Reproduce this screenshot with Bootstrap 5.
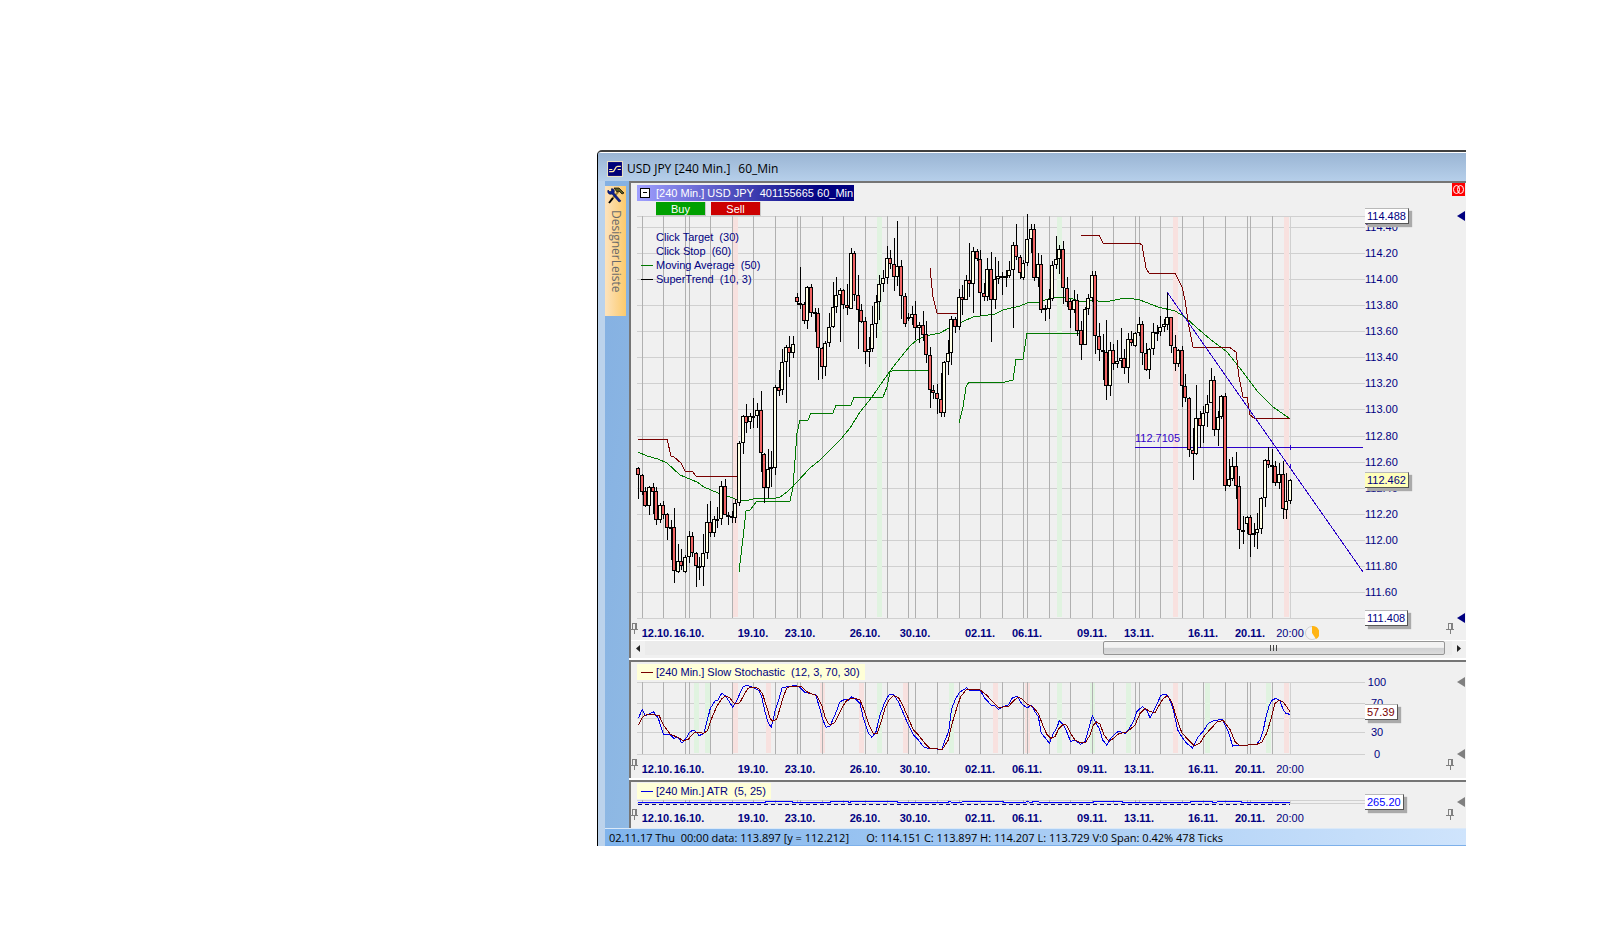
<!DOCTYPE html>
<html lang="en">
<head>
<meta charset="utf-8">
<meta name="viewport" content="width=device-width, initial-scale=1">
<title>USD JPY [240 Min.] 60_Min</title>
<link href="https://cdn.jsdelivr.net/npm/bootstrap@5.3.0/dist/css/bootstrap.min.css" rel="stylesheet">
<style>
  body { background: #fff; font-family: "Liberation Sans", Arial, sans-serif; font-size: 11px; line-height: 14px; color: #000080; }
  .desktop { display: grid; grid-template-columns: 597fr 869fr 141fr; padding-top: 150px; }
  .chart-window { grid-column: 2; min-width: 0; background: #bcd3ec; border-top: 2px solid #3f3f3f; border-left: 1px solid #000; border-top-left-radius: 5px; overflow: hidden; }
  .titlebar { height: 29px; border-top: 1px solid #fff; background: linear-gradient(#9ab5d4, #b6cfea); font: 12px/16px "Open Sans", sans-serif; color: #000; padding: 8px 0 0 9px; }
  .workspace { padding-left: 7px; }
  .sidebar { width: 24px; background: linear-gradient(100deg, #84b0e2, #8fb9e4); padding-top: 5px; }
  .side-tab { width: 21px; height: 130px; background: linear-gradient(90deg, #fde3bd, #fcca6c); color: #6b6b6b; border: 0; padding: 1px 0 0; font: 12px/16px "Open Sans", sans-serif; }
  .side-tab span { writing-mode: vertical-rl; margin-top: 6px; }
  .panes { background: #fff; }
  .pane { background: #f0f0f0; border-top: 2px solid #757575; border-left: 2px solid #757575; }
  .pane-main { height: 477px; margin-bottom: 2px; padding-top: 2px; }
  .pane-stoch { height: 118px; margin-bottom: 2px; padding-top: 2px; }
  .pane-stoch .tag { margin-bottom: 2px; }
  .pane-atr { height: 48px; padding-top: 1px; }
  .inset-row { margin-left: 6px; }
  .instrument { width: 217px; height: 16px; background: linear-gradient(90deg, #a0a0ff, #000080 86%); color: #fff; padding-left: 3px; line-height: 16px; white-space: pre; }
  .collapse-box { width: 10px; height: 10px; background: #fff; border: 1px solid #000; margin-right: 6px; padding: 0; position: relative; }
  .collapse-box::after { content: ""; position: absolute; left: 2px; right: 2px; top: 3px; height: 1px; background: #000; }
  .trade-row { height: 15px; padding: 1px 0 0 19px; }
  .trade { width: 50px; height: 14px; border: 1px solid #c8c8c8; border-width: 0 1px 1px 0; color: #fff; padding: 1px 0 0; font-size: 11px; line-height: 13px; margin-right: 5px; }
  .buy { background: #00a000; }
  .sell { background: #cc0000; }
  .plot { position: relative; min-width: 0; }
  .plot svg { display: block; width: 100%; overflow: visible; }
  .plot path, .plot line, .plot polyline { vector-effect: non-scaling-stroke; fill: none; }
  .h-403 { height: 403px; }
  .h-73 { height: 73px; }
  .h-6 { height: 6px; }
  .axis { width: 101px; position: relative; }
  .axis .tick { position: absolute; left: 0; transform: translateY(-50%); }
  .axis .mid { width: 24px; text-align: center; }
  .value-box { position: absolute; left: 0; transform: translateY(-50%); background: #fff; border: 1px solid #b8b8b8; border-left: 0; border-right-color: #555; border-bottom-color: #555; box-shadow: 3px 3px 1px #aaa; padding: 0 2px; line-height: 14px; z-index: 1; }
  .marker { position: absolute; right: 1px; transform: translateY(-50%); border: 5px solid transparent; border-left: 0; border-right: 8px solid #000080; }
  .marker.grey { border-right-color: #808080; }
  .dates { position: relative; height: 21px; margin: 0 101px 0 6px; font-weight: 700; }
  .dates span { position: absolute; top: 7px; transform: translateX(-50%); }
  .dates .last { font-weight: 400; }
  .pane-atr .dates span { top: 6px; }
  .date-row { position: relative; }
  .pin { position: absolute; top: 4px; }
  .pin-l { left: -1px; }
  .pin-r { right: 11px; }
  .alert-box { position: absolute; right: 1px; top: 0; }
  .legend { position: absolute; left: 4px; top: 14px; white-space: pre; }
  .legend div { padding-left: 15px; height: 14px; position: relative; }
  .legend .keyed::before, .tag::before { content: ""; position: absolute; left: 0; top: 7px; width: 12px; height: 1px; background: var(--key); }
  .level-label { position: absolute; transform: translateY(-100%); color: #3200c8; }
  .tag { position: relative; width: max-content; height: 16px; line-height: 16px; background: #ffffd7; padding: 0 5px 0 19px; white-space: pre; }
  .tag::before { left: 4px; top: 8px; }
  .scroll-track { height: 15px; background: #ebebeb; border-top: 1px solid #fff; }
  .scroll-track button { width: 14px; border: 0; padding: 0; background: #f0f0f0; line-height: 0; }
  .track { display: grid; grid-template-columns: 457fr 342fr 7fr; }
  .thumb { grid-column: 2; border: 1px solid #959595; border-radius: 2px; background: linear-gradient(#f3f3f3 45%, #cfd0d2 50%, #dcdcdc); display: flex; align-items: center; justify-content: center; gap: 2px; }
  .thumb i { width: 1px; height: 6px; background: #444; }
  .status { margin-left: 7px; height: 18px; background: linear-gradient(90deg, #80b4ec, #cfe4fc); border-bottom: 1px solid #7db0ea; border-top: 1px solid #dbe9f8; color: #000; font: 11px/18px "Open Sans", sans-serif; padding-left: 4px; white-space: pre; overflow: hidden; }
</style>
</head>
<body>
<div class="desktop">
<main class="chart-window">
  <header class="titlebar d-flex">
    <svg width="16" height="16" viewBox="0 0 15 15" class="me-1 flex-shrink-0"><rect width="15" height="15" fill="#e8e0c0"/><rect x="1" y="1" width="13" height="13" fill="#000078"/><path d="M2 10h3c3 0 2-5 5-5h3" stroke="#ffe9a8" fill="none" stroke-width="1.300"/><path d="M2 8h3M10 8h3" stroke="#ffe9a8" fill="none"/></svg>
    <span>USD JPY [240 Min.]</span><span class="ms-2">60_Min</span>
  </header>
  <div class="workspace d-flex">
    <aside class="sidebar flex-shrink-0">
      <button class="side-tab d-flex flex-column align-items-center" type="button">
        <svg width="17" height="17" viewBox="0 0 17 17" class="flex-shrink-0"><path d="M4 13 12 4" stroke="#a08030" stroke-width="2"/><path d="M2 16 6 11" stroke="#000" stroke-width="2"/><path d="M7 1h5l3 3 2 2-2 1-3-3-2 1z" fill="#5c5c20" stroke="#000" stroke-width=".7"/><path d="M1 3l2 2 2-2-1-1c3-1 4 2 3 4l7 8-2 1-7-8c-3 1-5-1-4-4z" fill="#0a1e90" stroke="#001050" stroke-width=".6"/></svg>
        <span>DesignerLeiste</span>
      </button>
    </aside>
    <div class="panes flex-grow-1">
      <section class="pane pane-main position-relative">
        <svg class="alert-box" width="13" height="13" viewBox="0 0 13 13"><rect width="13" height="13" fill="#f00"/><g fill="none" stroke="#fff"><ellipse cx="4.500" cy="6.500" rx="3" ry="4"/><ellipse cx="8.500" cy="6.500" rx="3" ry="4"/></g></svg>
        <div class="inset-row instrument d-flex align-items-center"><button class="collapse-box flex-shrink-0" type="button" aria-label="Collapse"></button>[240 Min.] USD JPY  401155665 60_Min</div>
        <div class="inset-row trade-row d-flex"><button class="trade buy" type="button">Buy</button><button class="trade sell" type="button">Sell</button></div>
        <div class="inset-row d-flex">
          <div class="plot flex-grow-1">
            <svg id="price" class="h-403" viewBox="637 216 728 403" preserveAspectRatio="none" shape-rendering="crispEdges">
              <g class="grid"></g>
              <g stroke="#007800">
                <polyline points="638,452 647,456 658,459 667,463 680,475 697,482 704,487 718,493 730,497 738,500 745,501 757,498 772,499 780,497 787,492 797,482 810,468 820,460 829,451 841,439 850,428 860,412 872,397 883,381 893,367 901,357 910,346 917,340 923,337 930,335 940,333 949,328 952,326 962,322 973,317 995,314 1003,310 1020,306 1027,303 1040,302 1053,297 1065,297 1073,299 1082,302 1090,300 1105,302 1120,299 1128,298 1140,300 1158,307 1175,311 1185,317 1197,328 1210,339 1227,352 1243,372 1257,391 1273,407 1289,418"/>
                <polyline points="739,572 743,538 746,511 750,510 757,501 790,501 793,487 797,433 800,420 808,420 811,413 833,413 836,405 851,405 854,397 883,397 887,387 890,372 894,370 928,370"/>
                <polyline points="959,423 963,407 966,387 969,382 1005,382 1009,381 1013,380 1016,359 1023,359 1027,333 1079,333"/>
              </g>
              <g stroke="#780000">
                <polyline points="638,439 667,439 671,456 674,457 681,463 685,471 692,471 696,476 737,476"/>
                <polyline points="930,268 933,297 937,313 957,313"/>
                <polyline points="1081,235 1099,235 1103,243 1139,243 1142,245 1146,268 1149,273 1175,273 1182,287 1185,300 1189,327 1193,347 1229,347 1236,352 1239,377 1243,397 1247,397 1250,415 1254,418 1290,418"/>
              </g>
              <g stroke="#2a00c8">
                <line x1="1135" y1="447" x2="1363" y2="447"/><line x1="1290" y1="445" x2="1290" y2="450"/>
                <line x1="1167" y1="292" x2="1363" y2="572"/><line x1="1290" y1="464" x2="1290" y2="469"/>
              </g>
              <g id="candles"></g>
            </svg>
            <div class="legend"><div>Click Target  (30)</div><div>Click Stop  (60)</div><div class="keyed" style="--key:#007800">Moving Average  (50)</div><div class="keyed" style="--key:#000">SuperTrend  (10, 3)</div></div>
          </div>
          <div class="axis flex-shrink-0" id="price-axis"></div>
        </div>
        <div class="date-row"><div class="dates"></div></div>
        <div class="scroll-track d-flex">
          <button type="button" aria-label="Scroll left"><svg width="4" height="7" viewBox="0 0 4 7"><path d="M4 0v7L0 3.500z" fill="#222"/></svg></button>
          <div class="track flex-grow-1"><div class="thumb"><i></i><i></i><i></i></div></div>
          <button type="button" aria-label="Scroll right"><svg width="4" height="7" viewBox="0 0 4 7"><path d="M0 0v7L4 3.500z" fill="#222"/></svg></button>
        </div>
      </section>
      <section class="pane pane-stoch">
        <div class="inset-row tag" style="--key:#780000">[240 Min.] Slow Stochastic  (12, 3, 70, 30)</div>
        <div class="inset-row d-flex">
          <div class="plot flex-grow-1">
            <svg id="stoch" class="h-73" viewBox="637 682 728 73" preserveAspectRatio="none" shape-rendering="crispEdges">
              <g class="grid"></g>
              <g stroke="#0000e6" transform="translate(590 600) scale(.33333)">
                <polyline points="145,355 157,328 166,347 178,342 190,335 205,355 220,403 240,403 252,415 264,411 276,430 290,412 300,395 312,390 328,407 342,400 352,360 361,325 375,303 384,300 395,280 406,287 418,305 428,322 440,303 450,280 460,260 472,256 484,260 505,270 515,290 525,335 535,370 544,382 556,330 566,300 577,262 600,260 614,256 630,262 645,277 660,280 677,285 688,320 697,355 708,382 720,378 735,345 750,305 765,298 775,300 785,290 800,300 810,310 820,355 835,400 846,412 858,395 870,345 885,305 897,285 910,283 925,305 940,340 955,375 970,405 985,420 1000,440 1020,447 1042,447 1055,450 1065,420 1076,395 1084,330 1095,300 1108,277 1120,270 1130,263 1140,272 1170,270 1185,295 1203,315 1215,318 1225,328 1238,320 1255,315 1268,292 1282,290 1298,315 1312,323 1325,315 1335,335 1345,350 1354,400 1367,415 1378,430 1390,400 1400,385 1408,362 1420,375 1430,395 1442,425 1455,420 1472,433 1485,425 1498,380 1507,347 1518,370 1528,385 1538,420 1550,435 1562,415 1575,402 1585,394 1605,400 1615,390 1630,365 1640,335 1657,320 1670,330 1680,353 1690,335 1702,310 1712,287 1725,282 1736,290 1750,330 1763,390 1777,413 1790,430 1808,444 1825,410 1840,393 1855,370 1870,362 1897,358 1905,375 1915,395 1928,438 1945,436 1962,438 1980,434 2000,433 2010,420 2020,390 2028,350 2038,315 2047,300 2058,295 2070,303 2080,330 2088,340 2099,343"/>
              </g>
              <g stroke="#780000" transform="translate(590 600) scale(.33333)">
                <polyline points="145,375 157,352 170,343 207,346 220,375 240,402 265,413 280,422 295,418 310,400 320,396 340,400 352,393 365,355 380,320 395,297 406,288 418,292 430,308 440,312 450,307 462,285 474,265 484,261 505,265 517,280 530,320 540,355 548,364 560,358 570,325 580,290 590,265 600,260 635,260 650,275 665,282 680,287 695,315 705,350 715,370 722,375 735,367 750,335 765,308 775,298 795,295 810,300 820,325 835,370 850,402 862,400 872,370 885,325 897,300 910,287 925,292 940,320 955,355 970,390 985,405 1005,430 1020,445 1057,448 1075,420 1085,375 1100,325 1112,290 1128,270 1170,270 1190,285 1210,308 1225,322 1255,320 1270,303 1282,293 1295,295 1310,312 1330,322 1345,340 1360,380 1370,402 1382,415 1395,410 1407,385 1420,373 1430,376 1442,400 1455,420 1470,427 1487,427 1500,405 1510,375 1520,366 1530,372 1542,405 1558,425 1570,415 1588,400 1610,397 1635,375 1650,340 1665,325 1680,335 1695,338 1708,315 1720,295 1732,288 1745,305 1760,355 1775,397 1795,420 1813,437 1830,430 1845,405 1870,378 1882,365 1900,362 1920,388 1935,425 1950,437 2000,433 2015,427 2030,400 2045,350 2055,310 2068,300 2080,307 2090,320 2100,335"/>
              </g>
            </svg>
          </div>
          <div class="axis flex-shrink-0" id="stoch-axis"></div>
        </div>
        <div class="date-row"><div class="dates"></div></div>
      </section>
      <section class="pane pane-atr">
        <div class="inset-row tag" style="--key:#0000e6">[240 Min.] ATR  (5, 25)</div>
        <div class="inset-row d-flex">
          <div class="plot flex-grow-1">
            <svg id="atr" class="h-6" viewBox="637 799 728 6" preserveAspectRatio="none" shape-rendering="crispEdges">
              <g class="grid"></g>
              <polyline stroke="#0000ff" points="638,802.500 765,802.500 766,801.500 792,801.500 793,802.500 830,802.500 831,801.500 848,801.500 849,802.500 852,801.500 897,801.500 898,802.500 948,802.500 949,801.500 953,802.500 971,801.500 1003,801.500 1004,802.500 1025,802.500 1027,801.500 1031,802.500 1034,801.500 1044,802.500 1093,802.500 1094,801.500 1122,801.500 1123,802.500 1190,802.500 1191,801.500 1212,801.500 1213,802.500 1222,801.500 1241,801.500 1242,802.500 1290,802.500"/>
              <line x1="638" y1="804.500" x2="1290" y2="804.500" stroke="#000080" stroke-dasharray="4 3"/>
            </svg>
          </div>
          <div class="axis flex-shrink-0" id="atr-axis"></div>
        </div>
        <div class="date-row"><div class="dates"></div></div>
      </section>
    </div>
  </div>
  <footer class="status">02.11.17 Thu  00:00 data: 113.897 [y = 112.212]      O: 114.151 C: 113.897 H: 114.207 L: 113.729 V:0 Span: 0.42% 478 Ticks</footer>
</main>
</div>
<script src="https://cdn.jsdelivr.net/npm/bootstrap@5.3.0/dist/js/bootstrap.bundle.min.js"></script>
<script>
// Time axis: session lines and date labels share one x scale, 637 to 1365.
const X0 = 637, W = 728;
const sessions = [642,663,685,689,710,732,753,775,797,800,822,843,865,887,908,915,937,959,980,1002,1023,1027,1049,1070,1092,1113,1135,1139,1160,1182,1203,1225,1247,1250,1272];
const dates = [['12.10.',657],['16.10.',689],['19.10.',753],['23.10.',800],['26.10.',865],['30.10.',915],['02.11.',980],['06.11.',1027],['09.11.',1092],['13.11.',1139],['16.11.',1203],['20.11.',1250],['20:00',1290]];
const rect = (x, y, w, h, f) => `<rect x="${x}" y="${y}" width="${w}" height="${h}" fill="${f}"/>`;

function grid(id, top, bottom, rows, bands) {
  let s = '';
  rows.forEach(y => s += rect(X0, y, W, 1, '#d0d0d0'));
  bands.forEach(([x, c]) => s += rect(x, top + 1, 5, bottom - top - 2, c === 'r' ? '#f8e1df' : '#e0f3e0'));
  sessions.forEach(x => s += rect(x, top, 1, bottom - top, '#b0b0b0'));
  s += rect(1290, top, 1, bottom - top, '#d0d0d0');
  document.querySelector(`#${id} .grid`).innerHTML = s;
}
const priceRows = Array.from({length: 15}, (_, i) => Math.round(227 + i * 26.07));
grid('price', 216, 618, [216, ...priceRows, 618], [[733,'r'],[877,'g'],[1057,'g'],[1173,'r'],[1284,'r']]);
grid('stoch', 682, 754, [682,703,718,732,754], [[694,'g'],[705,'g'],[733,'r'],[766,'r'],[820,'r'],[859,'r'],[877,'g'],[903,'r'],[949,'g'],[993,'r'],[1025,'r'],[1057,'g'],[1090,'g'],[1126,'g'],[1173,'r'],[1205,'g'],[1266,'g'],[1284,'r']]);
grid('atr', 800, 803, [800, 803], []);

// Candles: x, high, body top, body bottom, low; "-" marks a falling bar.
const bars = `638 467 468 474 499 -|642 474 475 491 495 -|645 487 491 505 507 -|649 486 487 505 515|653 483 487 491 514 -|656 487 491 519 525 -|660 503 505 519 523|663 501 505 514 519 -|667 513 514 527 540 -|671 520 527 528 560 -|674 508 527 570 583 -|678 544 561 571 573|681 549 561 565 570 -|685 555 557 571 573|689 531 536 556 563|692 532 536 552 557 -|696 552 553 565 587 -|699 557 566 567 580|703 534 553 566 586|707 504 522 552 559|710 501 522 532 537 -|714 516 519 532 537|717 507 519 520 528|721 481 486 518 525|725 479 486 514 515 -|728 512 515 516 525|732 511 516 517 523|735 499 503 517 523|739 441 443 502 506|743 415 416 442 454|746 404 416 422 433 -|750 413 416 421 429|753 398 416 417 428|757 403 410 415 428|761 391 410 452 472 -|764 453 454 487 503 -|768 449 469 487 498|771 451 467 468 487|775 385 387 467 475|779 370 387 390 396 -|782 349 362 389 395|786 345 347 361 403|789 336 347 352 377 -|793 336 344 352 358|797 293 297 301 305 -|800 267 303 304 309|804 302 304 320 324 -|807 286 287 320 329|811 284 287 312 317 -|815 308 312 313 332|818 308 313 347 380 -|822 347 348 366 379 -|825 341 343 366 376|829 313 327 342 347|833 282 307 326 328|836 277 295 306 313|840 288 290 294 342|843 289 290 304 309 -|847 284 305 307 315 -|851 248 253 308 309|854 251 253 294 301 -|858 275 295 309 349 -|861 304 310 321 323 -|865 317 321 351 364 -|869 337 349 351 367|872 306 324 348 352|876 295 302 323 338|879 275 284 301 320|883 270 278 283 292|887 246 258 277 284|890 250 258 263 269 -|894 238 264 276 291 -|897 221 266 276 286|901 260 266 295 319 -|905 293 296 323 327 -|908 313 317 318 321|912 306 314 317 325|915 301 314 327 340 -|919 322 325 327 343|923 311 325 334 341 -|926 321 334 354 363 -|930 347 355 389 408 -|933 385 390 392 399 -|937 384 393 398 414 -|941 373 399 412 417 -|944 361 362 412 417|948 340 353 361 375|951 316 319 352 365|955 317 319 326 333 -|959 289 297 326 330|962 285 297 299 315 -|966 275 280 299 300|969 243 280 283 297 -|973 247 251 283 313|977 249 251 258 261 -|980 250 259 292 316 -|984 283 293 296 301 -|987 258 269 296 301|991 252 269 299 342 -|995 257 279 299 309|998 261 276 278 284|1002 272 276 277 295|1006 270 276 277 287|1009 261 270 275 278|1013 242 245 269 328|1016 224 245 256 260 -|1020 255 257 272 279 -|1023 260 263 277 280|1027 214 239 262 266|1031 224 229 238 253|1034 224 229 277 281 -|1038 253 264 277 287|1041 255 264 309 313 -|1045 305 308 309 321|1049 289 299 308 319|1052 261 265 298 301|1056 236 259 264 269|1059 245 249 258 274|1063 241 249 287 304 -|1067 277 288 301 307 -|1070 299 301 309 328 -|1074 290 300 309 313|1077 294 300 330 336 -|1081 321 330 344 360 -|1085 307 309 344 345|1088 294 298 308 315|1092 271 275 297 302|1095 271 275 335 354 -|1099 323 336 349 361 -|1103 334 350 351 380|1106 320 352 385 400 -|1110 342 350 385 396|1113 344 350 363 370 -|1117 340 361 363 368|1121 328 358 360 368|1124 349 358 367 374 -|1128 333 339 367 383|1131 331 339 342 346 -|1135 332 333 345 347|1139 317 324 332 336|1142 321 324 352 365 -|1146 343 353 369 371 -|1149 348 349 369 379|1153 323 332 348 355|1157 325 332 333 341|1160 316 327 331 336|1164 319 324 326 332|1167 293 317 324 330|1171 317 317 345 353 -|1175 335 347 363 371 -|1178 349 350 363 367|1182 346 350 385 407 -|1185 374 386 397 402 -|1189 397 398 449 457 -|1193 428 450 453 480 -|1196 385 418 453 455|1200 411 418 425 448 -|1203 406 413 425 443|1207 395 404 412 427|1211 368 380 402 403|1214 376 380 429 436 -|1218 411 417 429 446|1221 395 396 416 419|1225 393 396 485 491 -|1229 459 479 485 487|1232 457 466 478 481|1236 452 466 485 499 -|1239 476 486 529 549 -|1243 516 530 531 544|1247 516 517 523 534|1250 515 517 534 557 -|1254 523 533 534 547|1257 513 529 532 549|1261 497 498 528 534|1265 459 460 497 507|1268 447 460 464 468 -|1272 449 465 466 483|1275 461 466 482 486 -|1279 463 474 482 489|1283 461 474 508 519 -|1286 473 501 509 519|1290 479 480 500 504`;
document.getElementById('candles').innerHTML = bars.split('|').map(b => {
  const p = b.split(' '), [x, hi, t, bt, lo] = p.map(Number);
  let s = rect(x, hi, 1, lo - hi, '#000') + rect(x - 2, t, 4, bt - t + 1, '#000');
  if (bt - t > 1) s += rect(x - 1, t + 1, 2, bt - t - 1, p[5] ? '#f06464' : '#ffffe6');
  return s;
}).join('');

const pc = (v, a, n) => ((v - a) / n * 100).toFixed(3) + '%';
function axis(id, top, h, ticks, boxes, marks, cls = '') {
  document.getElementById(id).innerHTML =
    ticks.map(([t, y]) => `<span class="tick ${cls}" style="top:${pc(y, top, h)}">${t}</span>`).join('') +
    boxes.map(([t, y, fg, bg]) => `<span class="value-box" style="top:${pc(y, top, h)};color:${fg};background:${bg}">${t}</span>`).join('') +
    marks.map(([y, c]) => `<span class="marker ${c}" style="top:${pc(y, top, h)}"></span>`).join('');
}
axis('price-axis', 216, 403, priceRows.map((y, i) => [(114.4 - i * .2).toFixed(2), y]),
  [['114.488',216,'#000080','#fff'],['112.462',480,'#000080','#ffffb9'],['111.408',618,'#000080','#fff']], [[216,''],[618,'']]);
axis('stoch-axis', 682, 73, [['100',682],['70',703],['30',732],['0',754]], [['57.39',712,'#780000','#fff']], [[682,'grey'],[754,'grey']], 'mid');
axis('atr-axis', 799, 6, [], [['265.20',802,'#0000ff','#fff']], [[802,'grey']]);

// Price tag of the horizontal line
const lvl = document.createElement('span');
lvl.className = 'level-label'; lvl.textContent = '112.7105';
lvl.style.left = pc(1135, X0, W); lvl.style.top = pc(445, 216, 403);
document.querySelector('.pane-main .plot').append(lvl);

const pin = c => `<svg class="pin ${c}" width="9" height="11" viewBox="0 0 9 11" shape-rendering="crispEdges"><path d="M2.500 6V.500h4V6M0 6.500h8M4.500 7v4M5.500 1v5" stroke="#808080" fill="none"/></svg>`;
document.querySelectorAll('.date-row').forEach(r => {
  r.firstElementChild.innerHTML = dates.map(([t, x], i) => `<span class="${i === 12 ? 'last' : ''}" style="left:${pc(x, X0, W)}">${t}</span>`).join('');
  r.insertAdjacentHTML('beforeend', pin('pin-l') + pin('pin-r'));
});
// Time left in the current bar
document.querySelector('.pane-main .dates').insertAdjacentHTML('beforeend',
  `<span style="left:${pc(1312, X0, W)}"><svg width="14" height="14" viewBox="0 0 14 14" class="d-block"><circle cx="7" cy="7" r="6.500" fill="#f4f4f4" stroke="#d0d0d0"/><path d="M7 7V0a7 7 0 0 1 4 13z" fill="#ffb414"/></svg></span>`);
</script>
</body>
</html>
